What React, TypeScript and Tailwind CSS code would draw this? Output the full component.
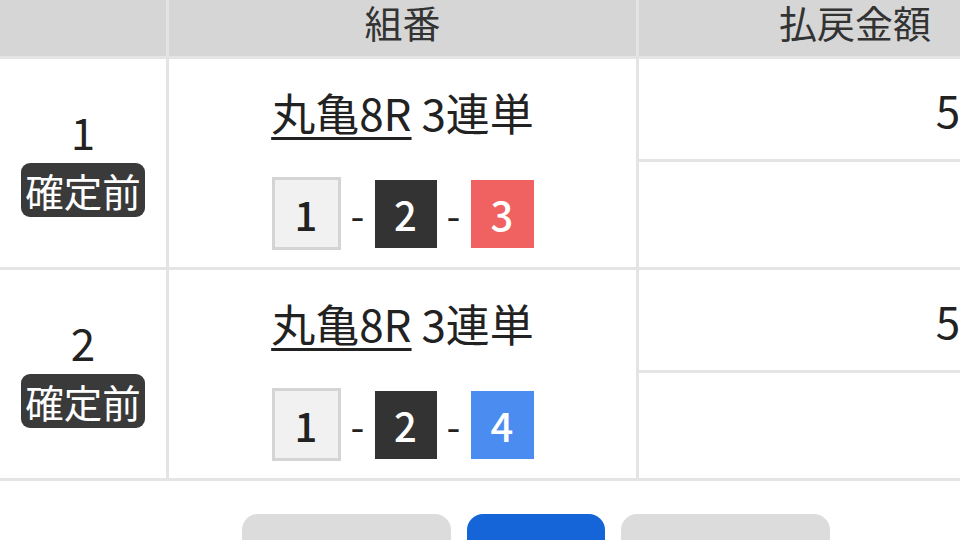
import React from 'react';

type Row = {
  no: number;
  race: string;
  kind: string;
  combo: { n: number; cls: string }[];
  payout: string;
};

const rows: Row[] = [
  {
    no: 1,
    race: '丸亀8R',
    kind: '3連単',
    combo: [
      { n: 1, cls: 'w-[69px] h-[73px] border-[3px] border-[#d4d4d4] bg-[#f1f1f1] text-[#222]' },
      { n: 2, cls: 'w-[62px] h-[68px] bg-[#333333] text-white' },
      { n: 3, cls: 'w-[63px] h-[68px] bg-[#f06262] text-white' },
    ],
    payout: '500円',
  },
  {
    no: 2,
    race: '丸亀8R',
    kind: '3連単',
    combo: [
      { n: 1, cls: 'w-[69px] h-[73px] border-[3px] border-[#d4d4d4] bg-[#f1f1f1] text-[#222]' },
      { n: 2, cls: 'w-[62px] h-[68px] bg-[#333333] text-white' },
      { n: 4, cls: 'w-[63px] h-[68px] bg-[#4a8cf0] text-white' },
    ],
    payout: '500円',
  },
];

const App = () => {
  return (
    <div
      className="w-[960px] h-[540px] overflow-hidden bg-white text-[#222]"
      style={{ fontFamily: '"Noto Sans CJK JP", "Noto Sans", sans-serif' }}
    >
      <div className="w-[1071px] -mt-[14px]">
        {/* table */}
        <div className="grid grid-cols-[166px_467px_432px] gap-[3px] bg-[#e4e4e4] pb-[3px]">
          <div className="h-[70px] bg-[#d6d6d6]" />
          <div className="h-[70px] bg-[#d6d6d6] flex items-center justify-center text-[38px] text-[#333]">
            組番
          </div>
          <div className="h-[70px] bg-[#d6d6d6] flex items-center justify-center text-[38px] text-[#333]">
            払戻金額
          </div>

          {rows.map((r) => (
            <React.Fragment key={r.no}>
              <div className="bg-white flex flex-col items-center justify-center pb-[4px]">
                <div className="text-[44px] leading-[53px]">{r.no}</div>
                <div className="mt-[5px] h-[54px] px-[4px] rounded-[9px] bg-[#3a3a3a] text-white text-[38.5px] leading-[54px]">
                  確定前
                </div>
              </div>
              <div className="bg-white flex flex-col items-center pt-[20px] pb-[17px]">
                <div className="h-[66px] text-[44px] leading-[66px] whitespace-nowrap">
                  <span className="underline decoration-[3px] underline-offset-[6px]">{r.race}</span>
                  <span> {r.kind}</span>
                </div>
                <div className="mt-[32px] h-[73px] flex items-center">
                  {r.combo.map((c, i) => (
                    <React.Fragment key={i}>
                      {i > 0 && (
                        <span className="w-[34px] text-center text-[40px] leading-none">-</span>
                      )}
                      <span
                        className={`flex items-center justify-center text-[40px] font-medium leading-none ${c.cls}`}
                      >
                        {c.n}
                      </span>
                    </React.Fragment>
                  ))}
                </div>
              </div>
              <div className="flex flex-col gap-[3px] bg-[#e4e4e4]">
                <div className="h-[100px] bg-white flex items-center justify-end pr-[18px] text-[44px]">
                  {r.payout}
                </div>
                <div className="flex-1 bg-white" />
              </div>
            </React.Fragment>
          ))}
        </div>

        {/* buttons */}
        <div className="mt-[33px] flex justify-center gap-[16px]">
          <div className="w-[209px] h-[60px] rounded-[16px] bg-[#dcdcdc]" />
          <div className="w-[138px] h-[60px] rounded-[16px] bg-[#1565d8]" />
          <div className="w-[209px] h-[60px] rounded-[16px] bg-[#dcdcdc]" />
        </div>
      </div>
    </div>
  );
};

export default App;
